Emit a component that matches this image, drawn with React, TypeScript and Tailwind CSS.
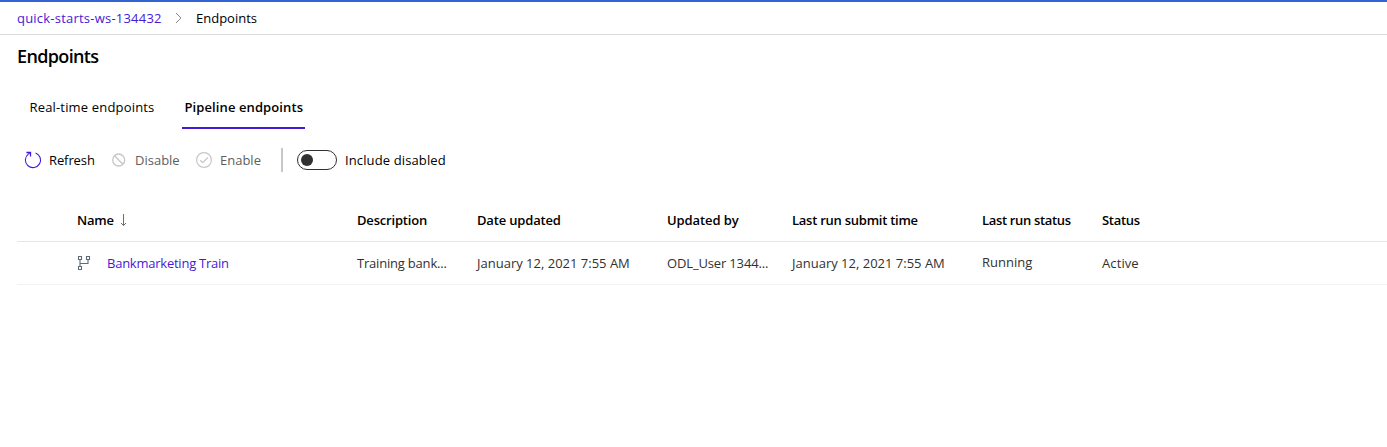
import React from "react";

const columns =
  "grid grid-cols-[60px_280px_120px_190px_125px_190px_120px_1fr] items-center";

function RefreshIcon() {
  return (
    <svg width="18" height="18" viewBox="0 0 18 18" fill="none" stroke="#4519d8" strokeWidth="1.1">
      <path d="M11.6 1.9A7.6 7.6 0 1 1 4.2 3.1L6.2 1.6" />
      <path d="M2.4 1.5h4.1v4.1" strokeWidth="1.3" />
    </svg>
  );
}

function DisableIcon() {
  return (
    <svg width="14" height="14" viewBox="0 0 14 14" fill="none" stroke="#c8c6c8" strokeWidth="1.3">
      <circle cx="6.7" cy="7" r="6" />
      <path d="m2.5 2.8 8.4 8.4" />
    </svg>
  );
}

function EnableIcon() {
  return (
    <svg width="16" height="16" viewBox="0 0 16 16" fill="none" stroke="#c8c6c8" strokeWidth="1.2">
      <circle cx="8" cy="8" r="7.4" />
      <path d="m4.2 8.2 2.5 2.5 5.2-5.2" strokeWidth="1.3" />
    </svg>
  );
}

function PipelineIcon() {
  return (
    <svg className="mt-px" width="14" height="15" viewBox="0 0 14 15" fill="none" stroke="#5f6b7e" strokeWidth="1.1">
      <path d="M1.5 .5h3v3h-3zM9.5 .5h3v3h-3zM1.5 10.5h3v3h-3zM3 3.5v7M11 3.5v4H3" />
    </svg>
  );
}

export default function App() {
  return (
    <div className="h-[447px] overflow-hidden bg-white font-['Open_Sans',sans-serif] text-[13px] leading-5 whitespace-nowrap text-black">
      <header className="flex h-[35px] items-center border-t-2 border-b border-t-[#3363d5] border-b-[#dcdcdc] pl-[17px]">
        <a className="w-[145px] tracking-[0.22px] text-[#4519d8]">quick-starts-ws-134432</a>
        <svg className="mx-[13px]" width="7" height="12" viewBox="0 0 7 12" fill="none" stroke="#8a8886">
          <path d="m1 1 5 5-5 5" />
        </svg>
        <span className="pl-px">Endpoints</span>
      </header>
      <h1 className="mt-[9px] pl-[17px] text-[18px] leading-6 font-semibold tracking-[-0.65px]">Endpoints</h1>
      <nav className="mt-[18px] flex h-[43px] pl-[17px] leading-[43px]">
        <span className="w-[165px] pl-[12.5px] tracking-[0.17px]">Real-time endpoints</span>
        <span className="w-[123px] border-b-2 border-[#4519d8] pl-[2.5px] font-semibold tracking-[0.1px]">Pipeline endpoints</span>
      </nav>
      <div className="mt-[19px] flex h-6 items-center pl-6">
        <RefreshIcon />
        <span className="ml-[7px] w-[63px] tracking-[-0.1px]">Refresh</span>
        <DisableIcon />
        <span className="ml-[9px] w-[61px] text-[#605e5c]">Disable</span>
        <EnableIcon />
        <span className="ml-2 w-[61px] text-[#605e5c]">Enable</span>
        <span className="h-6 w-0.5 bg-[#c8c6c8]" />
        <span className="ml-3.5 flex h-5 w-10 items-center rounded-full border border-[#323130] pl-[3px]">
          <span className="size-3 rounded-full bg-[#323130]" />
        </span>
        <span className="ml-2 tracking-[0.12px]">Include disabled</span>
      </div>
      <div className="mt-[26px] ml-[17px]">
        <div className={`${columns} h-[44px] border-b border-[#e6e6e6] font-semibold`}>
          <span />
          <span className="flex items-center tracking-[-0.25px]">
            Name
            <svg className="mt-0.5 ml-1.5" width="8" height="13" viewBox="0 0 8 13" fill="none" stroke="#706e6c">
              <path d="M3.5 0v11.5M1 9l2.5 2.5L6 9" />
            </svg>
          </span>
          <span className="tracking-[-0.18px]">Description</span>
          <span className="tracking-[-0.17px]">Date updated</span>
          <span className="tracking-[-0.1px]">Updated by</span>
          <span className="tracking-[-0.25px]">Last run submit time</span>
          <span className="tracking-[-0.33px]">Last run status</span>
          <span className="tracking-[-0.3px]">Status</span>
        </div>
        <div className={`${columns} h-[43px] border-b border-[#f3f2f1] text-[#323130]`}>
          <span />
          <span className="flex items-center">
            <PipelineIcon />
            <span className="ml-4 tracking-[-0.24px] text-[#4519d8]">Bankmarketing Train</span>
          </span>
          <span className="tracking-[-0.2px]">Training bank...</span>
          <span>January 12, 2021 7:55 AM</span>
          <span className="tracking-[-0.15px]">ODL_User 1344...</span>
          <span>January 12, 2021 7:55 AM</span>
          <span className="pb-0.5">Running</span>
          <span className="tracking-[0.1px]">Active</span>
        </div>
      </div>
    </div>
  );
}
